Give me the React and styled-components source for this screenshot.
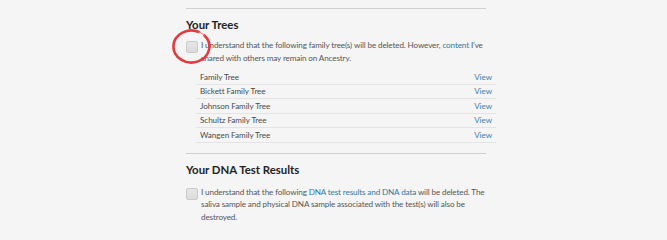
import React from "react";
import styled, { createGlobalStyle } from "styled-components";

const Global = createGlobalStyle`
  html, body { margin: 0; padding: 0; background: #f5f5f5; }
  body { font-family: Lato, "Open Sans", "Liberation Sans", sans-serif; }
`;

const Page = styled.div`
  width: 667px;
  height: 221px;
  overflow: hidden;
  display: flex;
  justify-content: flex-start;
  padding-left: 186px;
  box-sizing: border-box;
`;

const Column = styled.div`
  width: 300px;
  display: flex;
  flex-direction: column;
`;

const Section = styled.section`
  border-top: 1px solid #cfcfcf;
  margin-top: ${(p) => p.$top}px;
  padding-top: 9px;
`;

const Heading = styled.h2`
  margin: 0;
  font-size: 11.4px;
  line-height: 14px;
  font-weight: 700;
  color: #222;
`;

const ConfirmRow = styled.div`
  position: relative;
  display: flex;
  align-items: flex-start;
  gap: 3px;
  margin-top: ${(p) => p.$top}px;
`;

const Box = styled.span`
  flex: none;
  width: 10px;
  height: 10px;
  border: 1px solid #c9c9c9;
  border-radius: 2px;
  background: linear-gradient(#e6e6e6, #dcdcdc);
`;

const Text = styled.p`
  margin: -2px 0 0;
  font-size: 8.1px;
  letter-spacing: -0.12px;
  line-height: ${(p) => p.$lh}px;
  color: #555;
`;

const Link = styled.a`
  color: #2f7aa3;
  text-decoration: none;
`;

const List = styled.ul`
  list-style: none;
  margin: 5px 0 0 10px;
  padding: 0;
  width: 300px;
`;

const Row = styled.li`
  display: flex;
  justify-content: space-between;
  align-items: center;
  height: 13.5px;
  padding: 0 4px;
  font-size: 8.1px;
  letter-spacing: -0.05px;
  color: #4a4a4a;
  & + & { border-top: 1px solid #e4e4e4; }
  &:last-child { border-bottom: 1px solid #e4e4e4; }
`;

const ViewLink = styled.a`
  color: #3b82ad;
  text-decoration: none;
`;

const Circle = styled.svg`
  position: absolute;
  left: -14px;
  top: -12px;
  width: 39px;
  height: 35px;
  overflow: visible;
  pointer-events: none;
`;

const trees = [
  "Family Tree",
  "Bickett Family Tree",
  "Johnson Family Tree",
  "Schultz Family Tree",
  "Wangen Family Tree",
];

export default function App() {
  return (
    <>
      <Global />
      <Page>
        <Column>
          <Section $top={8}>
            <Heading>Your Trees</Heading>
            <ConfirmRow $top={9}>
              <Box />
              <Text $lh={13}>
                I understand that the following family tree(s) will be deleted. However,{" "}
                <Link href="#">content</Link> I’ve shared with others may remain on Ancestry.
              </Text>
              <Circle viewBox="0 0 39 35">
                <path
                  d="M27.1 3.0 A18 16 0 1 0 32.2 6.2"
                  fill="none"
                  stroke="#e23a3f"
                  strokeWidth="2.6"
                  strokeLinecap="round"
                />
                <path
                  d="M32.2 6.2 A18 16 0 0 0 27.1 3.0"
                  fill="none"
                  stroke="#ec8f92"
                  strokeWidth="1.2"
                  strokeLinecap="round"
                />
              </Circle>
            </ConfirmRow>
            <List>
              {trees.map((t) => (
                <Row key={t}>
                  <span>{t}</span>
                  <ViewLink href="#">View</ViewLink>
                </Row>
              ))}
            </List>
          </Section>
          <Section $top={10}>
            <Heading>Your DNA Test Results</Heading>
            <ConfirmRow $top={11}>
              <Box />
              <Text $lh={12.5}>
                I understand that the following <Link href="#">DNA test results and DNA data</Link> will be
                deleted. The saliva sample and physical DNA sample associated with the test(s) will also be
                destroyed.
              </Text>
            </ConfirmRow>
          </Section>
        </Column>
      </Page>
    </>
  );
}
